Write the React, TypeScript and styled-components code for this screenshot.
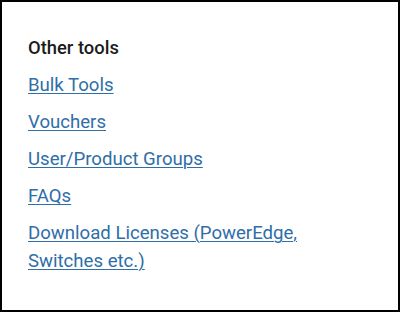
import React from "react";
import styled, { createGlobalStyle } from "styled-components";

const Global = createGlobalStyle`
  html, body { margin: 0; padding: 0; background: #fff; }
  * { box-sizing: border-box; }
`;

const Frame = styled.div`
  width: 400px;
  height: 312px;
  border: 2px solid #000;
  background: #fff;
  padding: 34px 50px 0 26px;
  font-family: Roboto, "Liberation Sans", Arial, sans-serif;
`;

const Heading = styled.h3`
  margin: 0 0 11px;
  font-size: 18.4px;
  line-height: 24px;
  font-weight: 500;
  color: #1b1b1b;
`;

const List = styled.ul`
  list-style: none;
  margin: 0;
  padding: 0;
  display: flex;
  flex-direction: column;
  gap: 9px;
`;

const Item = styled.li`
  font-size: 18.6px;
  line-height: 28px;
`;

const Link = styled.a`
  color: #2f6ea8;
  text-decoration: underline;
  text-underline-offset: 2px;
  text-decoration-thickness: 1px;
`;

const links = [
  "Bulk Tools",
  "Vouchers",
  "User/Product Groups",
  "FAQs",
  "Download Licenses (PowerEdge, Switches etc.)",
];

export default function App() {
  return (
    <>
      <Global />
      <Frame>
        <Heading>Other tools</Heading>
        <List>
          {links.map((l) => (
            <Item key={l}>
              <Link href="#">{l}</Link>
            </Item>
          ))}
        </List>
      </Frame>
    </>
  );
}
